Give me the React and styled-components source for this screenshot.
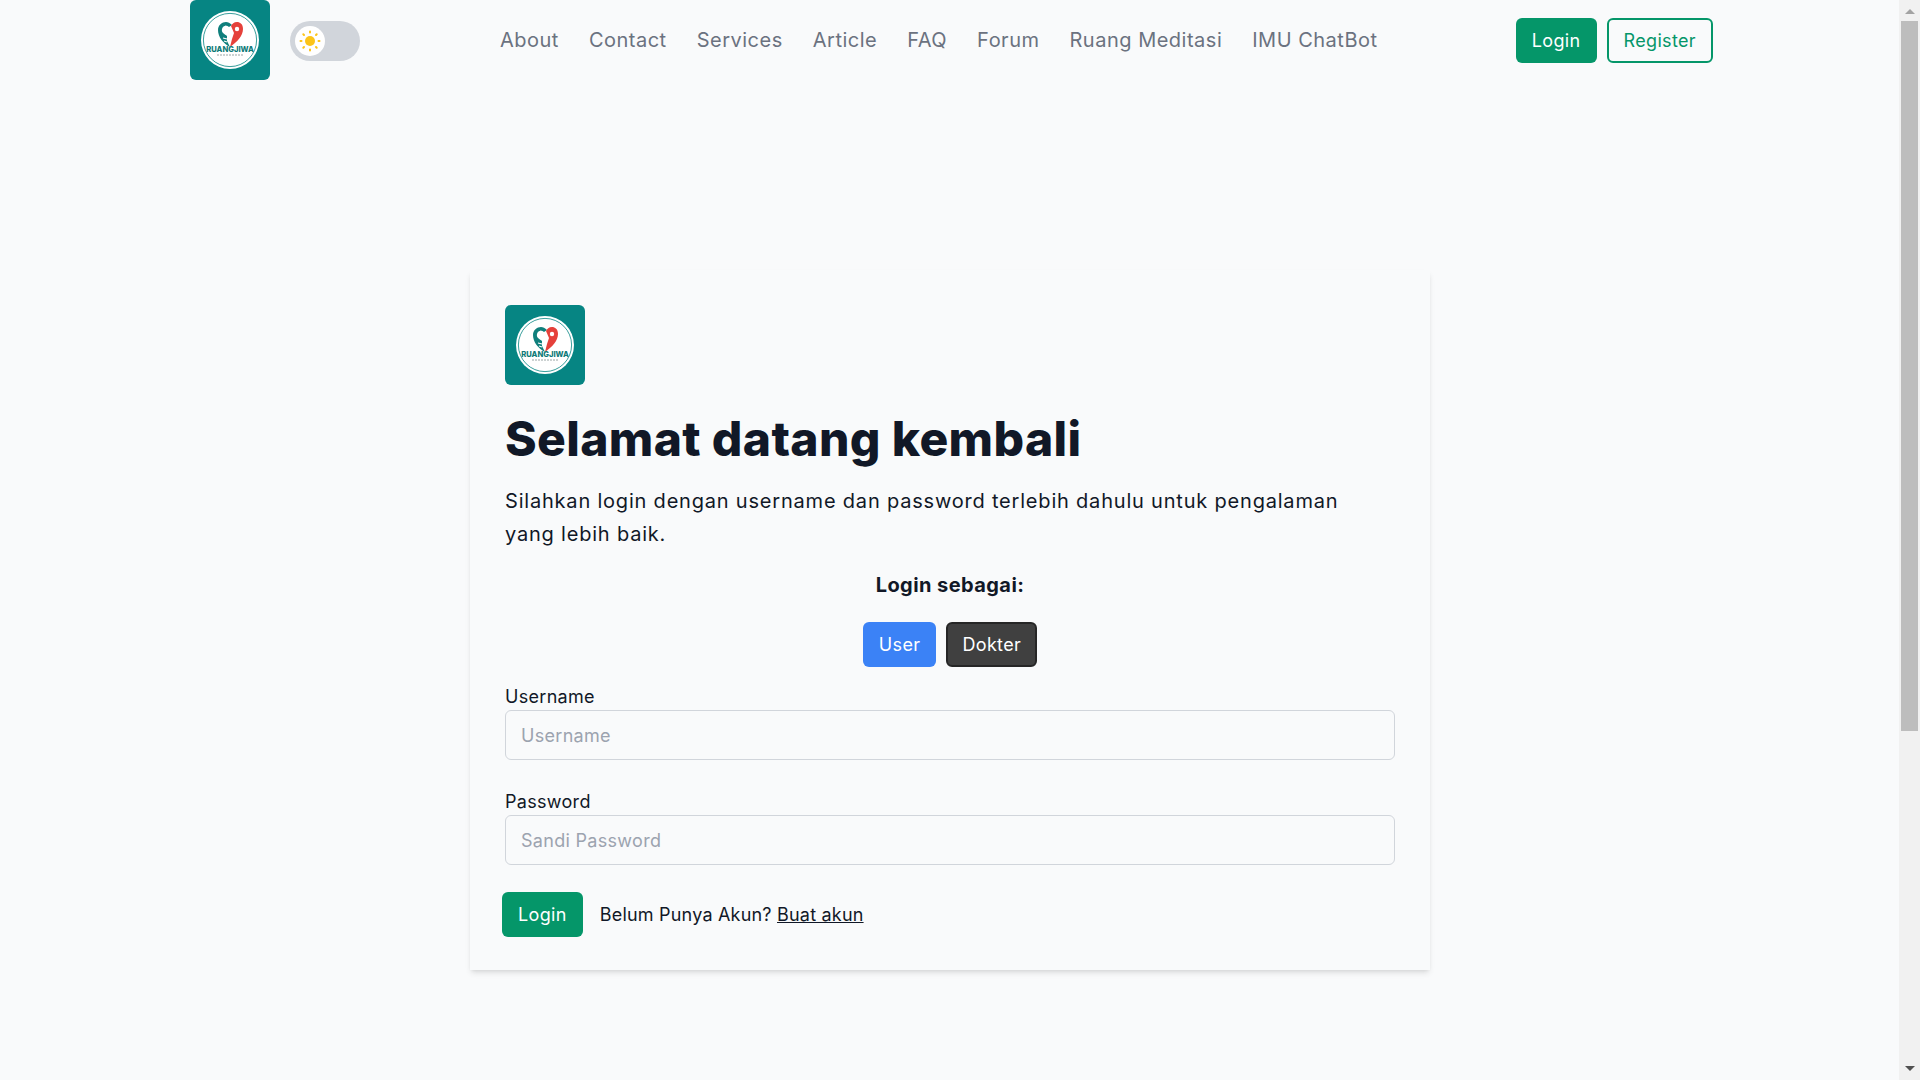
import React from "react";
import styled, { createGlobalStyle } from "styled-components";

const GlobalStyle = createGlobalStyle`
  body {
    margin: 0;
    background: #f9fafb;
    font-family: "Inter", "Noto Sans", sans-serif;
    color: #111827;
  }
`;

const navItems = [
  "About",
  "Contact",
  "Services",
  "Article",
  "FAQ",
  "Forum",
  "Ruang Meditasi",
  "IMU ChatBot",
];

function Logo() {
  return (
    <LogoBox>
      <svg width="80" height="80" viewBox="0 0 80 80">
        <circle cx="40" cy="40" r="29" fill="#fff" />
        <circle cx="40" cy="40" r="26.6" fill="none" stroke="#068583" strokeWidth="0.8" />
        <path d="M40 47C33 43 28 37 28 30c0-5 4-8 8-8 2 0 4 1 6 3l-3 2c-2-2-6-2-7 2-1 4 3 5 5 7v5z" fill="#0f7f7c" />
        <path d="M40 47c7-5 13-11 13-18 0-5-3-7-6-7-3 0-5 2-6 4l3 7-2 6z" fill="#e5413b" />
        <path d="M35 26l7 7M33 38l4 1M34 41l3 1" stroke="#fff" strokeWidth="1.2" />
        <circle cx="47" cy="29" r="2.2" fill="#fff" />
        <text x="40" y="52" textAnchor="middle" fontSize="7.6" fontWeight="800" fontFamily="Inter, sans-serif" fill="#0f7a78">
          RUANGJIWA
        </text>
        <path d="M27 55h26" stroke="#9aa5a5" strokeWidth="1" strokeDasharray="2 1" />
      </svg>
    </LogoBox>
  );
}

function App() {
  return (
    <>
      <GlobalStyle />
      <Header>
        <Logo />
        <Toggle>
          <Knob>
            <svg width="24" height="24" viewBox="0 0 24 24">
              <circle cx="12" cy="12" r="5" fill="#fcc419" />
              <g stroke="#fcc419" strokeWidth="2" strokeLinecap="round">
                <path d="M12 2.5v1M12 20.5v1M2.5 12h1M20.5 12h1M5.3 5.3l.7.7M18 18l.7.7M5.3 18.7l.7-.7M18 6l.7-.7" />
              </g>
            </svg>
          </Knob>
        </Toggle>
        <Nav>
          {navItems.map((item) => (
            <NavLink key={item}>{item}</NavLink>
          ))}
        </Nav>
        <HeaderButtons>
          <GreenButton>Login</GreenButton>
          <OutlineButton>Register</OutlineButton>
        </HeaderButtons>
      </Header>
      <Main>
        <Card>
          <Logo />
          <Title>Selamat datang kembali</Title>
          <Intro>
            Silahkan login dengan username dan password terlebih dahulu untuk
            pengalaman yang lebih baik.
          </Intro>
          <RoleTitle>Login sebagai:</RoleTitle>
          <RoleRow>
            <UserButton>User</UserButton>
            <DoctorButton>Dokter</DoctorButton>
          </RoleRow>
          <Field>
            <Label>Username</Label>
            <Input placeholder="Username" />
          </Field>
          <Field>
            <Label>Password</Label>
            <Input placeholder="Sandi Password" type="password" />
          </Field>
          <FormFooter>
            <GreenButton>Login</GreenButton>
            <FooterText>
              Belum Punya Akun? <u>Buat akun</u>
            </FooterText>
          </FormFooter>
        </Card>
      </Main>
      <ScrollRail>
        <ArrowUp />
        <ScrollThumb />
        <ArrowDown />
      </ScrollRail>
    </>
  );
}

export default App;

const Header = styled.header`
  width: 1523px;
  margin-left: 190px;
  height: 80px;
  display: flex;
  align-items: center;
`;

const LogoBox = styled.div`
  width: 80px;
  height: 80px;
  border-radius: 6px;
  background: #068583;
  flex: none;
`;

const Toggle = styled.div`
  width: 70px;
  height: 40px;
  margin: 2px 0 0 20px;
  border-radius: 20px;
  background: #d1d5db;
  display: flex;
  align-items: center;
  padding-left: 5px;
  box-sizing: border-box;
`;

const Knob = styled.div`
  width: 30px;
  height: 30px;
  border-radius: 50%;
  background: #fff;
  display: flex;
  align-items: center;
  justify-content: center;
`;

const Nav = styled.nav`
  display: flex;
  gap: 30px;
  margin-left: 140px;
`;

const NavLink = styled.a`
  font-size: 20px;
  letter-spacing: 0.5px;
  color: #6b7280;
`;

const HeaderButtons = styled.div`
  display: flex;
  gap: 10px;
  margin-left: auto;
`;

const BaseButton = styled.button`
  height: 45px;
  padding: 0 16px;
  border: 0;
  border-radius: 6px;
  font-family: inherit;
  font-size: 18px;
  letter-spacing: 0.35px;
  box-sizing: border-box;
`;

const GreenButton = styled(BaseButton)`
  background: #059669;
  color: #fff;
`;

const OutlineButton = styled(BaseButton)`
  padding: 0 15px;
  background: transparent;
  border: 2px solid #059669;
  color: #059669;
`;

const Main = styled.main`
  padding: 190px 0 30px 470px;
`;

const Card = styled.section`
  width: 960px;
  height: 700px;
  box-sizing: border-box;
  padding: 35px;
  background: #f9fafb;
  box-shadow: 0 4px 6px -1px rgba(0, 0, 0, 0.1), 0 2px 4px -2px rgba(0, 0, 0, 0.1);
`;

const Title = styled.h1`
  margin: 24px 0 0;
  font-size: 48px;
  line-height: 60px;
  font-weight: 800;
  letter-spacing: 0.36px;
  color: #111827;
`;

const Intro = styled.p`
  margin: 16px 0 0;
  max-width: 860px;
  font-size: 20px;
  line-height: 33px;
  letter-spacing: 0.8px;
`;

const RoleTitle = styled.div`
  margin-top: 17px;
  text-align: center;
  font-size: 20px;
  font-weight: 700;
  line-height: 34px;
  letter-spacing: 0.43px;
`;

const RoleRow = styled.div`
  display: flex;
  justify-content: center;
  gap: 10px;
  margin-top: 20px;
`;

const UserButton = styled(BaseButton)`
  background: #3b82f6;
  color: #fff;
`;

const DoctorButton = styled(BaseButton)`
  padding: 0 14px;
  background: #404040;
  border: 2px solid #262626;
  color: #fff;
`;

const Field = styled.div`
  margin-top: 16px;
  & + & {
    margin-top: 28px;
  }
`;

const Label = styled.label`
  display: block;
  font-size: 18px;
  line-height: 27px;
  letter-spacing: 0.3px;
`;

const Input = styled.input`
  display: block;
  width: 100%;
  height: 50px;
  box-sizing: border-box;
  padding: 0 15px;
  border: 1px solid #d1d5db;
  border-radius: 6px;
  background: transparent;
  font-family: inherit;
  font-size: 18px;
  letter-spacing: 0.3px;
  &::placeholder {
    color: #9ca3af;
  }
`;

const FormFooter = styled.div`
  display: flex;
  align-items: center;
  gap: 17px;
  margin: 27px 0 0 -3px;
`;

const FooterText = styled.span`
  font-size: 18px;
  letter-spacing: 0.2px;
`;

const ScrollRail = styled.div`
  position: fixed;
  top: 0;
  right: 0;
  bottom: 0;
  width: 21px;
  background: #f1f1f1;
  display: flex;
  flex-direction: column;
  align-items: center;
  padding-top: 9px;
  box-sizing: border-box;
`;

const ArrowUp = styled.div`
  width: 0;
  height: 0;
  border-left: 5px solid transparent;
  border-right: 5px solid transparent;
  border-bottom: 5px solid #a3a3a3;
`;

const ScrollThumb = styled.div`
  width: 17px;
  height: 710px;
  margin-top: 7px;
  background: #bdbdbd;
`;

const ArrowDown = styled.div`
  width: 0;
  height: 0;
  margin-top: auto;
  margin-bottom: 9px;
  border-left: 5px solid transparent;
  border-right: 5px solid transparent;
  border-top: 5px solid #505050;
`;
